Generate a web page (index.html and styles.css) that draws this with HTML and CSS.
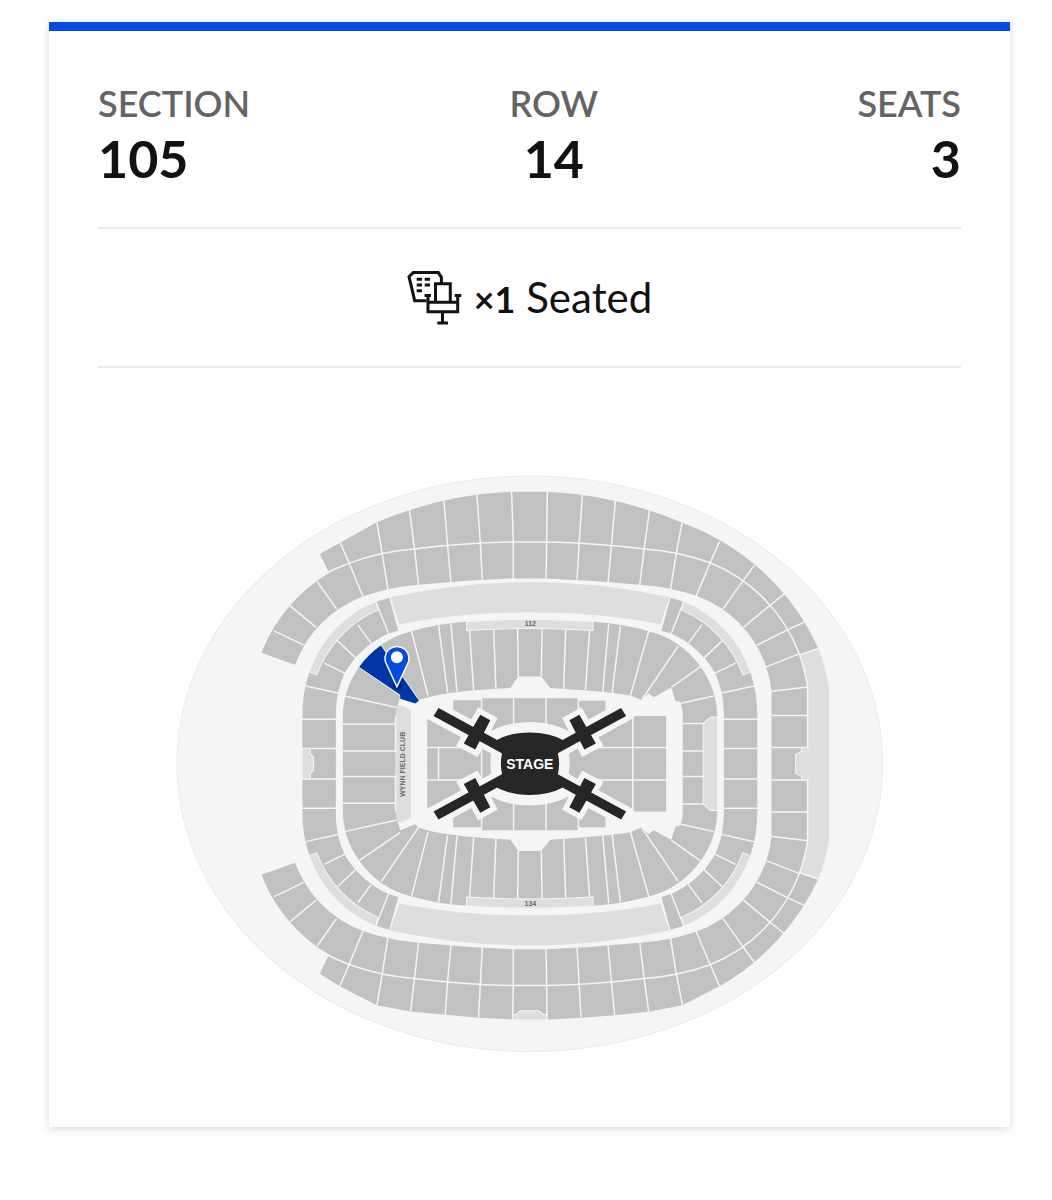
FILE: index.html
```html
<!DOCTYPE html>
<html lang="en">
<head>
    <meta charset="UTF-8">
    <meta name="viewport" content="width=device-width, initial-scale=1.0">
    <title>Ticket details</title>
    <link rel="stylesheet" href="styles.css">
</head>
<body>
    <main class="ticket">
        <dl class="seat-info">
            <div class="seat-item">
                <dt>SECTION</dt>
                <dd>105</dd>
            </div>
            <div class="seat-item center">
                <dt>ROW</dt>
                <dd>14</dd>
            </div>
            <div class="seat-item right">
                <dt>SEATS</dt>
                <dd>3</dd>
            </div>
        </dl>

        <div class="seat-type">
            <svg class="seat-icon" viewBox="0 0 55 56" aria-hidden="true">
                <path d="M19.5 30.7H7.7L2 6.7L6.3 2.6H31.3L34.4 7.3V13"/>
                <path d="M9.7 9.2H15M17.7 9.2H23M9.7 14.9H15M17.7 14.9H23M9.7 20.8H15"/>
                <path d="M28.5 32V13.8H43.3V32"/>
                <path d="M17.5 25.4H24M47.7 25.4H54.3M21 25.4V41.7H50.7V25.4M21 32.3H50.7M35.5 42V53M30.3 53H41"/>
            </svg>
            <p><strong>×1</strong> Seated</p>
        </div>

        <div class="map">
            <svg class="map-svg" viewBox="176 476 707 578" role="img" aria-label="Seat map, section 105">
                <defs>
                    <!-- upper half of the second tier, mirrored for the lower half -->
                    <g id="tier">
                        <path class="seats" d="M295 665.7L261.3 653.7A158 158 0 0 1 349 564A244 244 0 0 1 414.3 550A900 900 0 0 1 513 543H546A900 900 0 0 1 643.7 550A244 244 0 0 1 709.7 563.7A158 158 0 0 1 798.7 654.7A158 158 0 0 1 807 687.7V765H771V692A115 115 0 0 0 765.7 667.7A115 115 0 0 0 695.7 596.7A220 220 0 0 0 639.3 585.7A1500 1500 0 0 0 545.7 579.3H513.3A1500 1500 0 0 0 418.3 585.7A220 220 0 0 0 362.7 597.3A115 115 0 0 0 295 665.7Z"/>
                        <path class="line" d="M274 631.7L303.7 646M290 606.7L316 628.3M317 582.3L336.3 609.7M349 564L362.7 597.3M382 554.7L387.7 590.3M414.3 550L418.3 585.7M447.3 546.7L450.7 583M480 544L482 580.7M513 543V580M546.3 543L545.7 580M578.7 544.3L576.7 580.5M611 546.7L607.7 583M643.7 550L639.3 586M675.7 555L670 590.5M709.7 563.7L695.7 597M743 581L722.3 610M769.7 606L743 628.3M787.7 630.3L756 646.3M798.7 654.7L765.7 667.7M807 687.7L771 692M771 716.3H807M771 748.3H807"/>
                    </g>
                    <!-- one quarter of the middle ring -->
                    <g id="ring">
                        <path class="light" d="M390 598Q460 583 530 583V613Q460 613 399 625Z"/>
                        <path class="seats" d="M389 598.7L398 631.5L388.3 634.3A97 97 0 0 0 344.3 674A97 97 0 0 0 335.7 712V765H302.3V715A130 130 0 0 1 309.3 672.7A115 115 0 0 1 375.7 602.7Z"/>
                        <path class="light edge" d="M375.7 602.2L378 611A112 112 0 0 0 316.7 675.7L309 672.7A115 115 0 0 1 375.7 602.2Z"/>
                        <path class="line" d="M375.7 602.7L388.3 634.3M357.7 625.7L371 644M337.3 641.7L355.7 659M324 664L344.3 674M305.7 686.7L339 694M302 720H336M302 749.3H336"/>
                    </g>
                    <!-- upper half of the lower bowl -->
                    <g id="bowl">
                        <path class="seats" d="M342.7 765V715A87 87 0 0 1 359 667.7A92 92 0 0 1 411.3 632A270 270 0 0 1 466.3 622.7A1500 1500 0 0 1 592.7 622.7A270 270 0 0 1 648.3 632A92 92 0 0 1 700.3 667.7A87 87 0 0 1 716.7 715V765H682.3V713L680 702.7L675 701.7L670.7 688.3L653.3 698L648.3 694L641 700.7L630 696.3Q612 692.5 550 688.7L541 677.3H518L510 688.7Q440 692 418 701L415 704L400 698L397 708.3L395.3 717V765Z"/>
                        <path class="light" d="M397 708L400 705.5L410.5 710.5V765H395.3V717Z"/>
                        <path class="light edge" d="M466.3 622.7Q529.5 617.5 592.7 622.7V631.3Q529.5 627.5 466.3 631.3Z"/>
                        <path class="line" d="M380.7 646.3L419 702M359 667.7L400 696M411.3 632L427.7 696M438.3 626L447.3 693.3M450.7 624.7L456.7 692.5M469.3 631.3L473.3 691M493.3 630L495.7 689.5M517.3 629.3L518 677.3M541.7 629.3L541 677.3M565.3 630.5L563.3 690M589.3 631.3L585 691M608.3 625L602.3 693M620 626.5L611.7 694M648.3 632L630 696.3M677.7 647L641.7 700M700.3 667.3L670.7 688.3M713.3 696.7L680.7 704M344.3 696.7L396.7 708.3M342 725H395.3M342 751.7H395.3V718M682 724.3H703M682 751.7H703"/>
                    </g>
                    <!-- catwalk arm with its crossbar -->
                    <path id="arm" d="M438.3 708.7L496 740.3L508 757.5L433.3 716.7ZM480 715.5L490 721L475 750.3L463.5 744.3Z"/>
                    <path id="center" d="M496 741Q510 733.3 529.5 733.3Q549 733.3 563 741L557.5 754.5Q560 764.5 557.5 774.5L563 788Q549 795.7 529.5 795.7Q510 795.7 496 788L501.7 774.5Q499.5 764.5 501.7 754.5Z"/>
                </defs>

                <ellipse class="ground" cx="529.5" cy="764.5" rx="352.5" ry="287.5"/>

                <!-- outer tier -->
                <path class="seats" d="M319.7 555L376.7 523.3A384 384 0 0 1 511.3 492.7H547A384 384 0 0 1 681.7 523.7A238 238 0 0 1 817.7 649.3L798.7 656A158 158 0 0 0 709.7 563.7A244 244 0 0 0 643.7 550A900 900 0 0 0 546 543H513A900 900 0 0 0 414.3 550A244 244 0 0 0 349 564L328.3 572.7Z"/>
                <path class="seats" d="M319.7 974.3L339.7 986.7L376.7 1005.7L410.3 1012L445 1015.3L478.3 1018.3L512.3 1020H546.7L580.7 1018.3L614.3 1015.7L648.3 1012.3L682 1005.7L719 986.7A238 238 0 0 0 817.7 879.7L798.7 873A158 158 0 0 1 709.7 965.3A244 244 0 0 1 643.7 979A900 900 0 0 1 546 986H513A900 900 0 0 1 414.3 979A244 244 0 0 1 349 965L328.3 956.3Z"/>
                <path class="light" d="M817.7 649.3A160 160 0 0 1 828.3 688V841A160 160 0 0 1 817.7 879.7L798.7 873L807 841V688L798.7 656Z"/>
                <use href="#tier"/>
                <use href="#tier" transform="matrix(1 0 0 -1 0 1529)"/>
                <path class="line" d="M328.3 572.7L349 564A244 244 0 0 1 414.3 550A900 900 0 0 1 513 543H546A900 900 0 0 1 643.7 550A244 244 0 0 1 709.7 563.7A158 158 0 0 1 798.7 654.7A158 158 0 0 1 807 687.7V841.3A158 158 0 0 1 798.7 874.3A158 158 0 0 1 709.7 965.3A244 244 0 0 1 643.7 979A900 900 0 0 1 546 986H513A900 900 0 0 1 414.3 979A244 244 0 0 1 349 965L328.3 956.3"/>
                <path class="line" d="M339.7 542.7L349 564M376.7 523.3L382 554.7M409.3 511.3L414.3 550M443.7 501.7L447.3 546.7M476.7 495.7L480 544M511.3 492.7L513 543M547 492.7L546.3 543M582 496L578.7 544.3M615 502L611 546.7M649 511.3L643.7 550M681.7 523.7L675.7 555M719 542.3L709.7 563.7M754 566L743 581M785 593.7L769.7 606M805.3 622.3L787.7 630.3M817.7 649.3L798.7 655.7"/>
                <path class="line" d="M339.7 986.7L349 965M376.7 1005.7L382 974.3M410.3 1012L414.3 979M445 1015.3L447.3 982.3M478.3 1018.3L480 985M512.3 1020L513 986M546.7 1020L546.3 986M580.7 1018.3L578.7 984.7M614.3 1015.7L611 982.3M648.3 1012.3L643.7 979M682 1005.7L675.7 974M719 986.7L709.7 965.3M754 963L743 948M785 935.3L769.7 923M805.3 906.7L787.7 898.7M817.7 879.7L798.7 873.3"/>
                <path class="light edge" d="M808 748.3H801V752.3L795 755V774L801 777V780.7H808"/>
                <path class="light edge" d="M512.3 1020.5V1015H516L520 1011.3H538.5L542.7 1015H546.7V1020.5Z"/>

                <!-- middle ring -->
                <use href="#ring"/>
                <use href="#ring" transform="matrix(-1 0 0 1 1059 0)"/>
                <use href="#ring" transform="matrix(1 0 0 -1 0 1529)"/>
                <use href="#ring" transform="matrix(-1 0 0 -1 1059 1529)"/>
                <path class="light edge" d="M302 749.3H310V754L313.5 758V771L310 775V780H302Z"/>

                <!-- lower bowl -->
                <use href="#bowl"/>
                <use href="#bowl" transform="matrix(1 0 0 -1 0 1529)"/>
                <path class="light edge" d="M717 717.7H710L702.7 724.3V804.7L710 811.3H717Z"/>

                <!-- floor -->
                <path class="seats" d="M453 701H481V699H578V701.5H605V712L563 741H496L453 712Z"/>
                <path class="seats" d="M453 828H481V831H578V828H605V817L563 788H496L453 817Z"/>
                <path class="seats" d="M427 719.5L501 757V772L427 809.5Z"/>
                <path class="seats" d="M635 716.7H665.7V812.3H635L557 772V757Z"/>
                <path class="line" d="M481.3 699V831M513.3 699V831M545.7 699V831M578 699V725M578 804V831M427 748.3H470M427 780.7H470M438.3 748.3V780.7M590 748.3H666M590 780.7H666M632.3 716V813"/>
                <g class="halo">
                    <use href="#arm"/>
                    <use href="#arm" transform="matrix(-1 0 0 1 1059 0)"/>
                    <use href="#arm" transform="matrix(1 0 0 -1 0 1529)"/>
                    <use href="#arm" transform="matrix(-1 0 0 -1 1059 1529)"/>
                </g>
                <use class="stage-halo" href="#center"/>
                <g class="stage">
                    <use href="#arm"/>
                    <use href="#arm" transform="matrix(-1 0 0 1 1059 0)"/>
                    <use href="#arm" transform="matrix(1 0 0 -1 0 1529)"/>
                    <use href="#arm" transform="matrix(-1 0 0 -1 1059 1529)"/>
                    <use href="#center"/>
                </g>

                <!-- selected section and pin -->
                <path class="selected" d="M380.7 646.3A92 92 0 0 0 359 667.7L400 695.5V699.5L415 704.3L418.7 701.5Z"/>
                <ellipse class="pin-shadow" cx="397" cy="687" rx="5" ry="3"/>
                <path class="pin" d="M396.7 687.5L386.5 665.5A12 12 0 1 1 407 665.5Z"/>
                <circle class="pin-dot" cx="396.7" cy="658" r="6"/>

                <text class="stage-label" x="529.5" y="770">STAGE</text>
                <text class="map-label" x="530" y="627">112</text>
                <text class="map-label" x="530" y="907">134</text>
                <text class="map-label" x="0" y="0" transform="translate(405 765) rotate(-90)">WYNN FIELD CLUB</text>
            </svg>
        </div>
    </main>
</body>
</html>
```
FILE: styles.css
```css
body {
    margin: 0;
    background-color: #fff;
    color: #121212;
    font-family: Lato, "Open Sans", sans-serif;
}
.ticket {
    margin: 22px 42px 72px 49px;
    padding: 0 49px 73px;
    border-top: 9px solid #024ddf;
    background-color: #fff;
    box-shadow: 0 2px 8px rgba(0,0,0,0.15);
}
.seat-info {
    display: flex;
    justify-content: space-between;
    margin: 0;
    padding: 50px 0 38px;
    border-bottom: 2px solid #ebebeb;
}
.center {
    text-align: center;
}
.right {
    text-align: right;
}
.seat-item dt {
    margin-bottom: 2px;
    color: #646464;
    font-size: 36px;
    font-weight: 600;
    line-height: 44px;
}
.seat-item dd {
    margin: 0;
    font-size: 52px;
    font-weight: bold;
    line-height: 62px;
}
.seat-type {
    display: flex;
    align-items: center;
    justify-content: center;
    gap: 12px;
    padding: 40px 0;
    border-bottom: 2px solid #ebebeb;
}
.seat-type p {
    margin: 0;
    font-size: 42px;
    line-height: 57px;
}
.seat-type strong {
    font-size: 36px;
    line-height: 1;
}
.seat-icon {
    width: 55px;
    height: 56px;
    fill: none;
    stroke: #121212;
    stroke-width: 3;
}
.map {
    padding-top: 107px;
}
.map-svg {
    display: block;
    width: 82%;
    margin: 0 auto;
}
.ground {
    fill: #f5f5f5;
    stroke: #ebebeb;
}
.seats {
    fill: #c1c1c1;
}
.light {
    fill: #dedede;
}
.line {
    fill: none;
    stroke: #f5f5f5;
    stroke-width: 1.5;
}
.edge {
    stroke: #f5f5f5;
    stroke-width: 1;
}
.halo {
    fill: #f5f5f5;
    stroke: #f5f5f5;
    stroke-width: 11;
}
.stage-halo {
    fill: #f5f5f5;
    stroke: #f5f5f5;
    stroke-width: 21;
}
.stage {
    fill: #262626;
}
.selected {
    fill: #0037a6;
}
.pin {
    fill: #024ddf;
    stroke: #fff;
    stroke-width: 1.5;
}
.pin-dot {
    fill: #fff;
}
.pin-shadow {
    fill: #00226b;
}
.stage-label {
    fill: #fff;
    font-family: "Liberation Sans", Arial, sans-serif;
    font-size: 14px;
    font-weight: bold;
    text-anchor: middle;
}
.map-label {
    fill: #666;
    font-family: "Liberation Sans", Arial, sans-serif;
    font-size: 7px;
    font-weight: bold;
    text-anchor: middle;
}
```
